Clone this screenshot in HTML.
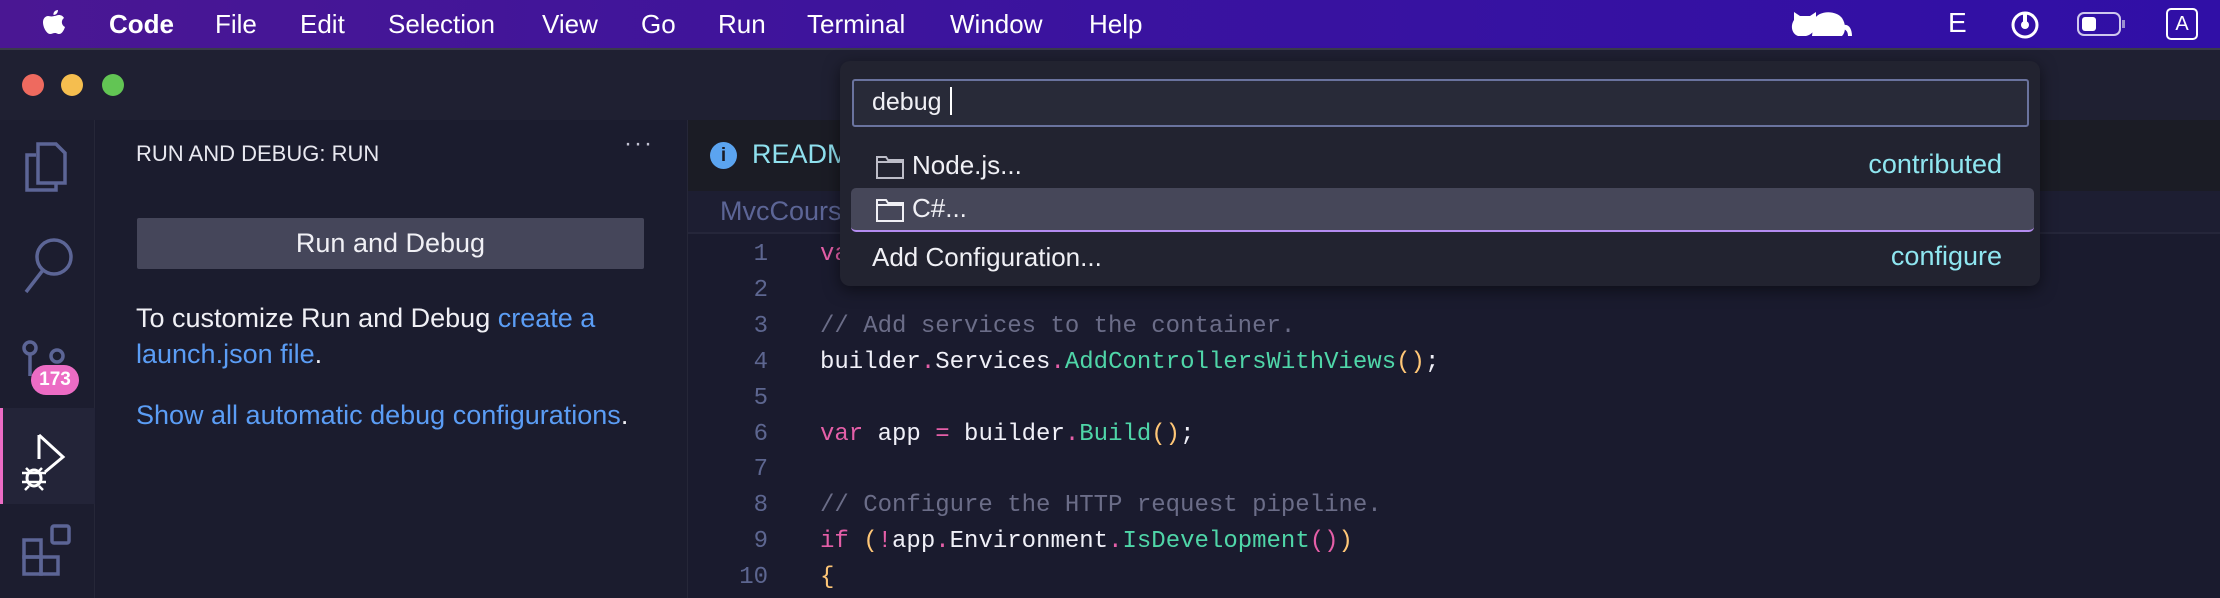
<!DOCTYPE html>
<html><head><meta charset="utf-8"><style>
*{margin:0;padding:0;box-sizing:border-box}
html,body{width:2220px;height:598px;overflow:hidden}
body{background:#1a1b2e;font-family:"Liberation Sans",sans-serif;position:relative}
.abs{position:absolute}
#menu{left:0;top:0;width:2220px;height:48px;background:linear-gradient(90deg,#4a1793,#3a139f 50%,#300fa6);color:#fff;font-size:26px}
#menu span{position:absolute;top:9px}
#title{left:0;top:48px;width:2220px;height:72px;background:#1f2032;border-top:2px solid #3a3b4a}
.tl{top:74px;width:22px;height:22px;border-radius:50%}
#act{left:0;top:120px;width:95px;height:478px;background:#1c1d2f;border-right:1px solid #262738}
#side{left:96px;top:120px;width:592px;height:478px;background:#1b1c2e;border-right:1px solid #262738}
#tabs{left:688px;top:120px;width:1532px;height:71px;background:#1b1c25}
#crumb{left:688px;top:191px;width:1532px;height:43px;background:#1d1e32;border-bottom:2px solid #25263a}
.code{font-family:"Liberation Mono",monospace;font-size:24px;color:#f0f0f8;white-space:pre}
.ln{left:688px;width:80px;text-align:right;color:#5d6690}
.cm{color:#6b6d88}.kw{color:#e55fa8}.fn{color:#4fd6a8}.p{color:#ffc777}.d{color:#e55fa8}
#qp{left:840px;top:61px;width:1200px;height:225px;background:#222330;border-radius:10px;box-shadow:0 4px 16px rgba(0,0,0,.5)}
.lbl{color:#8fe6f0;font-size:27px}
.it{color:#f0f0f5;font-size:26px}
</style></head><body>
<div id="menu" class="abs">
<svg class="abs" style="left:42px;top:8px" width="24" height="30" viewBox="0 0 24 30"><path d="M16 2c0 3-2 5-4.5 5C11 4 13.5 2 16 2zM12 8c2 0 3-1 5-1 2 0 4 1 5 3-3 2-3 7 1 9-1 3-3 7-6 7-2 0-2-1-4-1s-3 1-5 1c-3 0-7-6-7-12 0-4 3-6 5-6s3 1 6 0z" fill="#fff"/></svg>
<span style="left:109px;font-weight:bold">Code</span>
<span style="left:215px">File</span>
<span style="left:300px">Edit</span>
<span style="left:388px">Selection</span>
<span style="left:542px">View</span>
<span style="left:641px">Go</span>
<span style="left:718px">Run</span>
<span style="left:807px">Terminal</span>
<span style="left:950px">Window</span>
<span style="left:1089px">Help</span>
<svg class="abs" style="left:1790px;top:6px" width="110" height="36" viewBox="0 0 110 36"><path d="M4 6l6 4h10l6-4v8c0 8-2 14-10 16H8C2 28 0 20 4 14zM24 14c4-10 22-10 28-2 4 6 4 14 0 18H22zM50 20c8-4 12 2 12 10h-4c0-6-4-8-8-6z" fill="#fff"/></svg>
<span style="left:1948px;font-size:28px;top:7px">E</span>
<svg class="abs" style="left:2010px;top:8px" width="30" height="32" viewBox="0 0 30 32"><circle cx="15" cy="17" r="12" fill="none" stroke="#fff" stroke-width="3"/><path d="M15 4v10" stroke="#fff" stroke-width="4"/><circle cx="15" cy="17" r="4" fill="#fff"/></svg>
<svg class="abs" style="left:2077px;top:12px" width="50" height="24" viewBox="0 0 50 24"><rect x="1" y="1" width="42" height="22" rx="6" fill="none" stroke="#cfc8ee" stroke-width="2"/><rect x="5" y="5" width="14" height="14" rx="3" fill="#fff"/><rect x="45" y="8" width="3" height="8" fill="#9a90d0"/></svg>
<div class="abs" style="left:2166px;top:8px;width:32px;height:32px;border:2px solid #fff;border-radius:5px;font-size:20px;text-align:center;line-height:28px">A</div>
</div>
<div id="title" class="abs"></div>
<div class="abs tl" style="left:22px;background:#ee6a5f"></div>
<div class="abs tl" style="left:61px;background:#f5be4f"></div>
<div class="abs tl" style="left:102px;background:#62c554"></div>
<div id="act" class="abs">
<svg class="abs" style="left:24px;top:21px" width="44" height="52" viewBox="0 0 44 52"><path d="M12 14H3v35h29v-7M14 3h18l9 9v30H14z" fill="none" stroke="#5c6596" stroke-width="3.5"/></svg>
<svg class="abs" style="left:22px;top:116px" width="54" height="58" viewBox="0 0 54 58"><circle cx="32" cy="21" r="17" fill="none" stroke="#5c6596" stroke-width="3.5"/><path d="M21 34L4 56" stroke="#5c6596" stroke-width="3.5"/></svg>
<svg class="abs" style="left:22px;top:220px" width="50" height="36" viewBox="0 0 50 36"><circle cx="8" cy="8" r="6" fill="none" stroke="#5c6596" stroke-width="3.5"/><circle cx="35" cy="16" r="6" fill="none" stroke="#5c6596" stroke-width="3.5"/><path d="M8 14v22" stroke="#5c6596" stroke-width="3.5"/></svg>
<div class="abs" style="left:31px;top:245px;width:48px;height:30px;border-radius:15px;background:#ec6cc4;color:#fff;font-size:19px;font-weight:bold;text-align:center;line-height:30px">173</div>
<div class="abs" style="left:0;top:288px;width:95px;height:96px;background:#232438;border-left:3px solid #ec6cc4"></div>
<svg class="abs" style="left:18px;top:312px" width="60" height="60" viewBox="0 0 60 60"><path d="M21 3v24M21 3l24 22-18 15" fill="none" stroke="#fff" stroke-width="3"/><ellipse cx="16" cy="46" rx="7" ry="8" fill="none" stroke="#fff" stroke-width="3"/><path d="M4 41h24M4 50h24M8 36l4 4M24 36l-4 4M7 58l4-4M25 58l-4-4" stroke="#fff" stroke-width="2.5"/></svg>
<svg class="abs" style="left:22px;top:404px" width="56" height="56" viewBox="0 0 56 56"><rect x="2" y="16" width="17" height="17" fill="none" stroke="#5c6596" stroke-width="3.5"/><rect x="2" y="33" width="17" height="17" fill="none" stroke="#5c6596" stroke-width="3.5"/><rect x="19" y="33" width="17" height="17" fill="none" stroke="#5c6596" stroke-width="3.5"/><rect x="30" y="2" width="17" height="17" rx="2" fill="none" stroke="#5c6596" stroke-width="3.5"/></svg>
</div>
<div id="side" class="abs">
<div class="abs" style="left:40px;top:21px;color:#e8e8f0;font-size:22px">RUN AND DEBUG: RUN</div>
<div class="abs" style="left:528px;top:10px;color:#c0c0d0;font-size:24px;letter-spacing:2px">···</div>
<div class="abs" style="left:41px;top:98px;width:507px;height:51px;background:#45465a;border-radius:2px;color:#f0f0f5;font-size:27px;text-align:center;line-height:51px">Run and Debug</div>
<div class="abs" style="left:40px;top:180px;width:530px;color:#f0f0f5;font-size:27px;line-height:36px">To customize Run and Debug <span style="color:#5b9df5">create a launch.json file</span>.</div>
<div class="abs" style="left:40px;top:280px;color:#5b9df5;font-size:27px">Show all automatic debug configurations<span style="color:#f0f0f5">.</span></div>
</div>
<div id="tabs" class="abs">
<div class="abs" style="left:22px;top:22px;width:27px;height:27px;border-radius:50%;background:#5ba4f0;color:#1b1c25;font-weight:bold;font-size:19px;text-align:center;line-height:27px">i</div>
<div class="abs" style="left:64px;top:19px;color:#8fe0ee;font-size:27px">README.md</div>
</div>
<div id="crumb" class="abs"><div class="abs" style="left:32px;top:5px;color:#5c6596;font-size:27px">MvcCourse</div></div>
<div class="abs code" style="left:0;top:237px;line-height:35.9px;width:2220px">
<div class="abs ln code" style="top:0;line-height:35.9px">1
2
3
4
5
6
7
8
9
10</div>
<div class="abs code" style="left:820px;top:0;line-height:35.9px"><span class="kw">var</span> builder = WebApplication<span class="d">.</span><span class="fn">CreateBuilder</span><span class="p">(</span>args<span class="p">)</span>;

<span class="cm">// Add services to the container.</span>
builder<span class="d">.</span>Services<span class="d">.</span><span class="fn">AddControllersWithViews</span><span class="p">()</span>;

<span class="kw">var</span> app <span class="d">=</span> builder<span class="d">.</span><span class="fn">Build</span><span class="p">()</span>;

<span class="cm">// Configure the HTTP request pipeline.</span>
<span class="kw">if</span> <span class="p">(</span><span class="kw">!</span>app<span class="d">.</span>Environment<span class="d">.</span><span class="fn">IsDevelopment</span><span class="kw">()</span><span class="p">)</span>
<span class="p">{</span></div>
</div>
<div id="qp" class="abs">
<div class="abs" style="left:12px;top:18px;width:1177px;height:48px;background:#282a38;border:2px solid #6a739e;border-radius:3px"></div>
<div class="abs" style="left:32px;top:26px;color:#f0f0f5;font-size:25px">debug<span style="display:inline-block;width:2px;height:28px;background:#fff;margin-left:8px;vertical-align:-5px"></span></div>
<svg class="abs" style="left:36px;top:94px" width="28" height="24" viewBox="0 0 28 24"><path d="M1 2h9l2 3h15v18H1z M1 7h26" fill="none" stroke="#bdbdc8" stroke-width="2"/></svg>
<div class="abs it" style="left:72px;top:89px">Node.js...</div>
<div class="abs lbl" style="right:38px;top:88px">contributed</div>
<div class="abs" style="left:11px;top:127px;width:1183px;height:44px;background:#464759;border-radius:5px;border-bottom:2px solid #b48cf0"></div>
<svg class="abs" style="left:36px;top:137px" width="28" height="24" viewBox="0 0 28 24"><path d="M1 2h9l2 3h15v18H1z M1 7h26" fill="none" stroke="#f0f0f5" stroke-width="2"/></svg>
<div class="abs it" style="left:72px;top:132px">C#...</div>
<div class="abs it" style="left:32px;top:181px">Add Configuration...</div>
<div class="abs lbl" style="right:38px;top:180px">configure</div>
</div>
</body></html>
